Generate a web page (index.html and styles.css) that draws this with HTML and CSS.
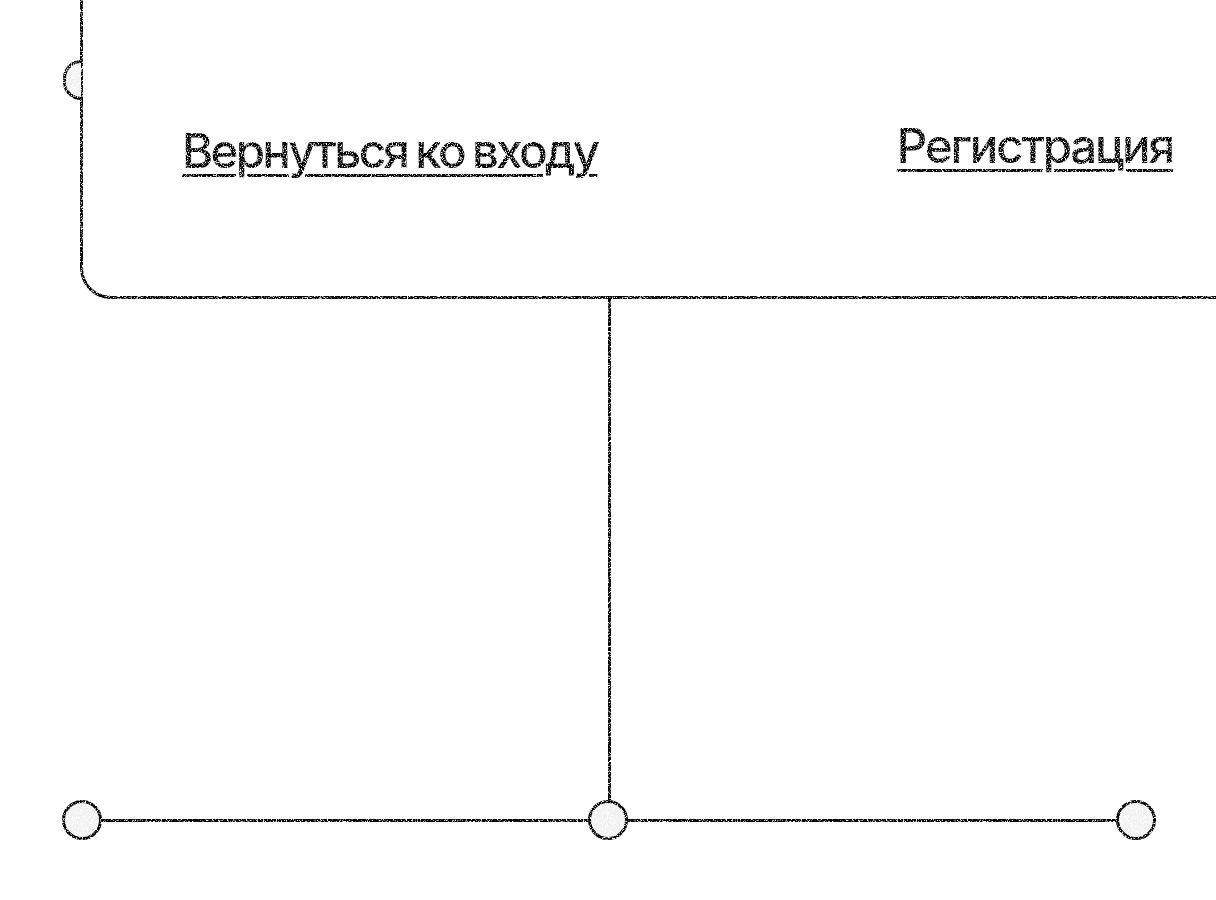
FILE: index.html
```html
<!DOCTYPE html>
<html lang="ru">
<head>
  <meta charset="UTF-8">
  <meta name="viewport" content="width=device-width, initial-scale=1.0">
  <title>Восстановление пароля</title>
  <link rel="stylesheet" href="styles.css">
</head>
<body>
  <!-- Фильтр зернистости для линий и текста -->
  <svg class="filters" width="0" height="0" aria-hidden="true">
    <filter id="grain" x="0" y="0" width="100%" height="100%" color-interpolation-filters="sRGB">
      <feTurbulence type="fractalNoise" baseFrequency="0.8" numOctaves="2" seed="4" result="noise"/>
      <feDisplacementMap in="SourceGraphic" in2="noise" scale="1.2" xChannelSelector="R" yChannelSelector="G" result="moved"/>
      <feColorMatrix in="noise" type="matrix" values="0 0 0 0 0  0 0 0 0 0  0 0 0 0 0  3.5 3.5 0 0 -2.5" result="specks"/>
      <feComposite in="moved" in2="specks" operator="in" result="cut"/>
      <feFlood flood-color="#fff" result="paper"/>
      <feComposite in="cut" in2="paper" operator="over"/>
    </filter>
  </svg>

  <main class="page">
    <section class="card">
      <span class="half-node"></span>
      <a class="link link-back" href="#">Вернуться ко входу</a>
      <a class="link link-signup" href="#">Регистрация</a>
    </section>

    <div class="stem"></div>

    <div class="rail">
      <span class="node"></span>
      <span class="wire wire-left"></span>
      <span class="node"></span>
      <span class="wire"></span>
      <span class="node"></span>
    </div>
  </main>
</body>
</html>
```

FILE: styles.css
```css
body {
  margin: 0;
  background: #fff;
  color: #000;
  font-family: Inter, 'Liberation Sans', Arial, sans-serif;
  overflow: hidden;
}

.filters {
  display: block;
  height: 0;
}

.page {
  height: 900px;
  filter: url(#grain);
}

/* Карточка уходит за верхний и правый край окна */
.card {
  position: relative;
  display: flex;
  justify-content: space-between;
  box-sizing: border-box;
  height: 299px;
  margin-left: 80px;
  padding: 0 43px 0 99px;
  border-left: 3px solid #000;
  border-bottom: 3px solid #000;
  border-bottom-left-radius: 31px;
}

.half-node {
  position: absolute;
  left: -20px;
  top: 60px;
  box-sizing: border-box;
  width: 18px;
  height: 40px;
  border: 3px solid #000;
  border-right: none;
  border-radius: 20px 0 0 20px;
  background: #f2f2f2;
}

.link {
  font-size: 47.5px;
  font-weight: 500;
  line-height: 56px;
  color: #000;
  text-decoration: underline;
  text-decoration-thickness: 3px;
  text-underline-offset: 6px;
}

.link-back {
  margin-top: 123px;
  letter-spacing: -2.7px;
  word-spacing: -2px;
}

.link-signup {
  margin-top: 118px;
  letter-spacing: -2.2px;
}

.stem {
  width: 3px;
  height: 501px;
  margin-left: 608px;
  background: #000;
}

.rail {
  display: flex;
  align-items: center;
  width: 1094px;
  margin-left: 62px;
}

.node {
  box-sizing: border-box;
  width: 40px;
  height: 40px;
  border: 3.5px solid #000;
  border-radius: 50%;
  background: #f2f2f2;
}

.wire {
  flex: 1;
  height: 3px;
  background: #000;
}

.wire-left {
  flex: 0 0 486px;
}
```
